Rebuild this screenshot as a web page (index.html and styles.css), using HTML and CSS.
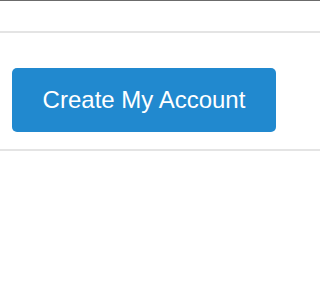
FILE: index.html
```html
<!DOCTYPE html>
<html>
<head>
<meta charset="utf-8">
<link rel="stylesheet" href="styles.css">
</head>
<body>
<div class="topbar"></div>
<section class="actions">
  <button class="btn-primary" type="button">Create My Account</button>
</section>
</body>
</html>
```
FILE: styles.css
```css
html, body {
  margin: 0;
  padding: 0;
  background: #ffffff;
  font-family: "Liberation Sans", Arial, sans-serif;
}
.topbar {
  height: 30px;
  border-top: 1px solid #6b6b6b;
  border-bottom: 2px solid #e4e4e4;
}
.actions {
  padding: 35px 12px 17px 12px;
  border-bottom: 2px solid #e4e4e4;
}
.btn-primary {
  display: block;
  width: 264px;
  height: 64px;
  margin: 0;
  padding: 0;
  border: none;
  border-radius: 5px;
  background: #2189cf;
  color: #ffffff;
  font-family: "Liberation Sans", Arial, sans-serif;
  font-size: 24px;
  line-height: 64px;
  text-align: center;
}
```
